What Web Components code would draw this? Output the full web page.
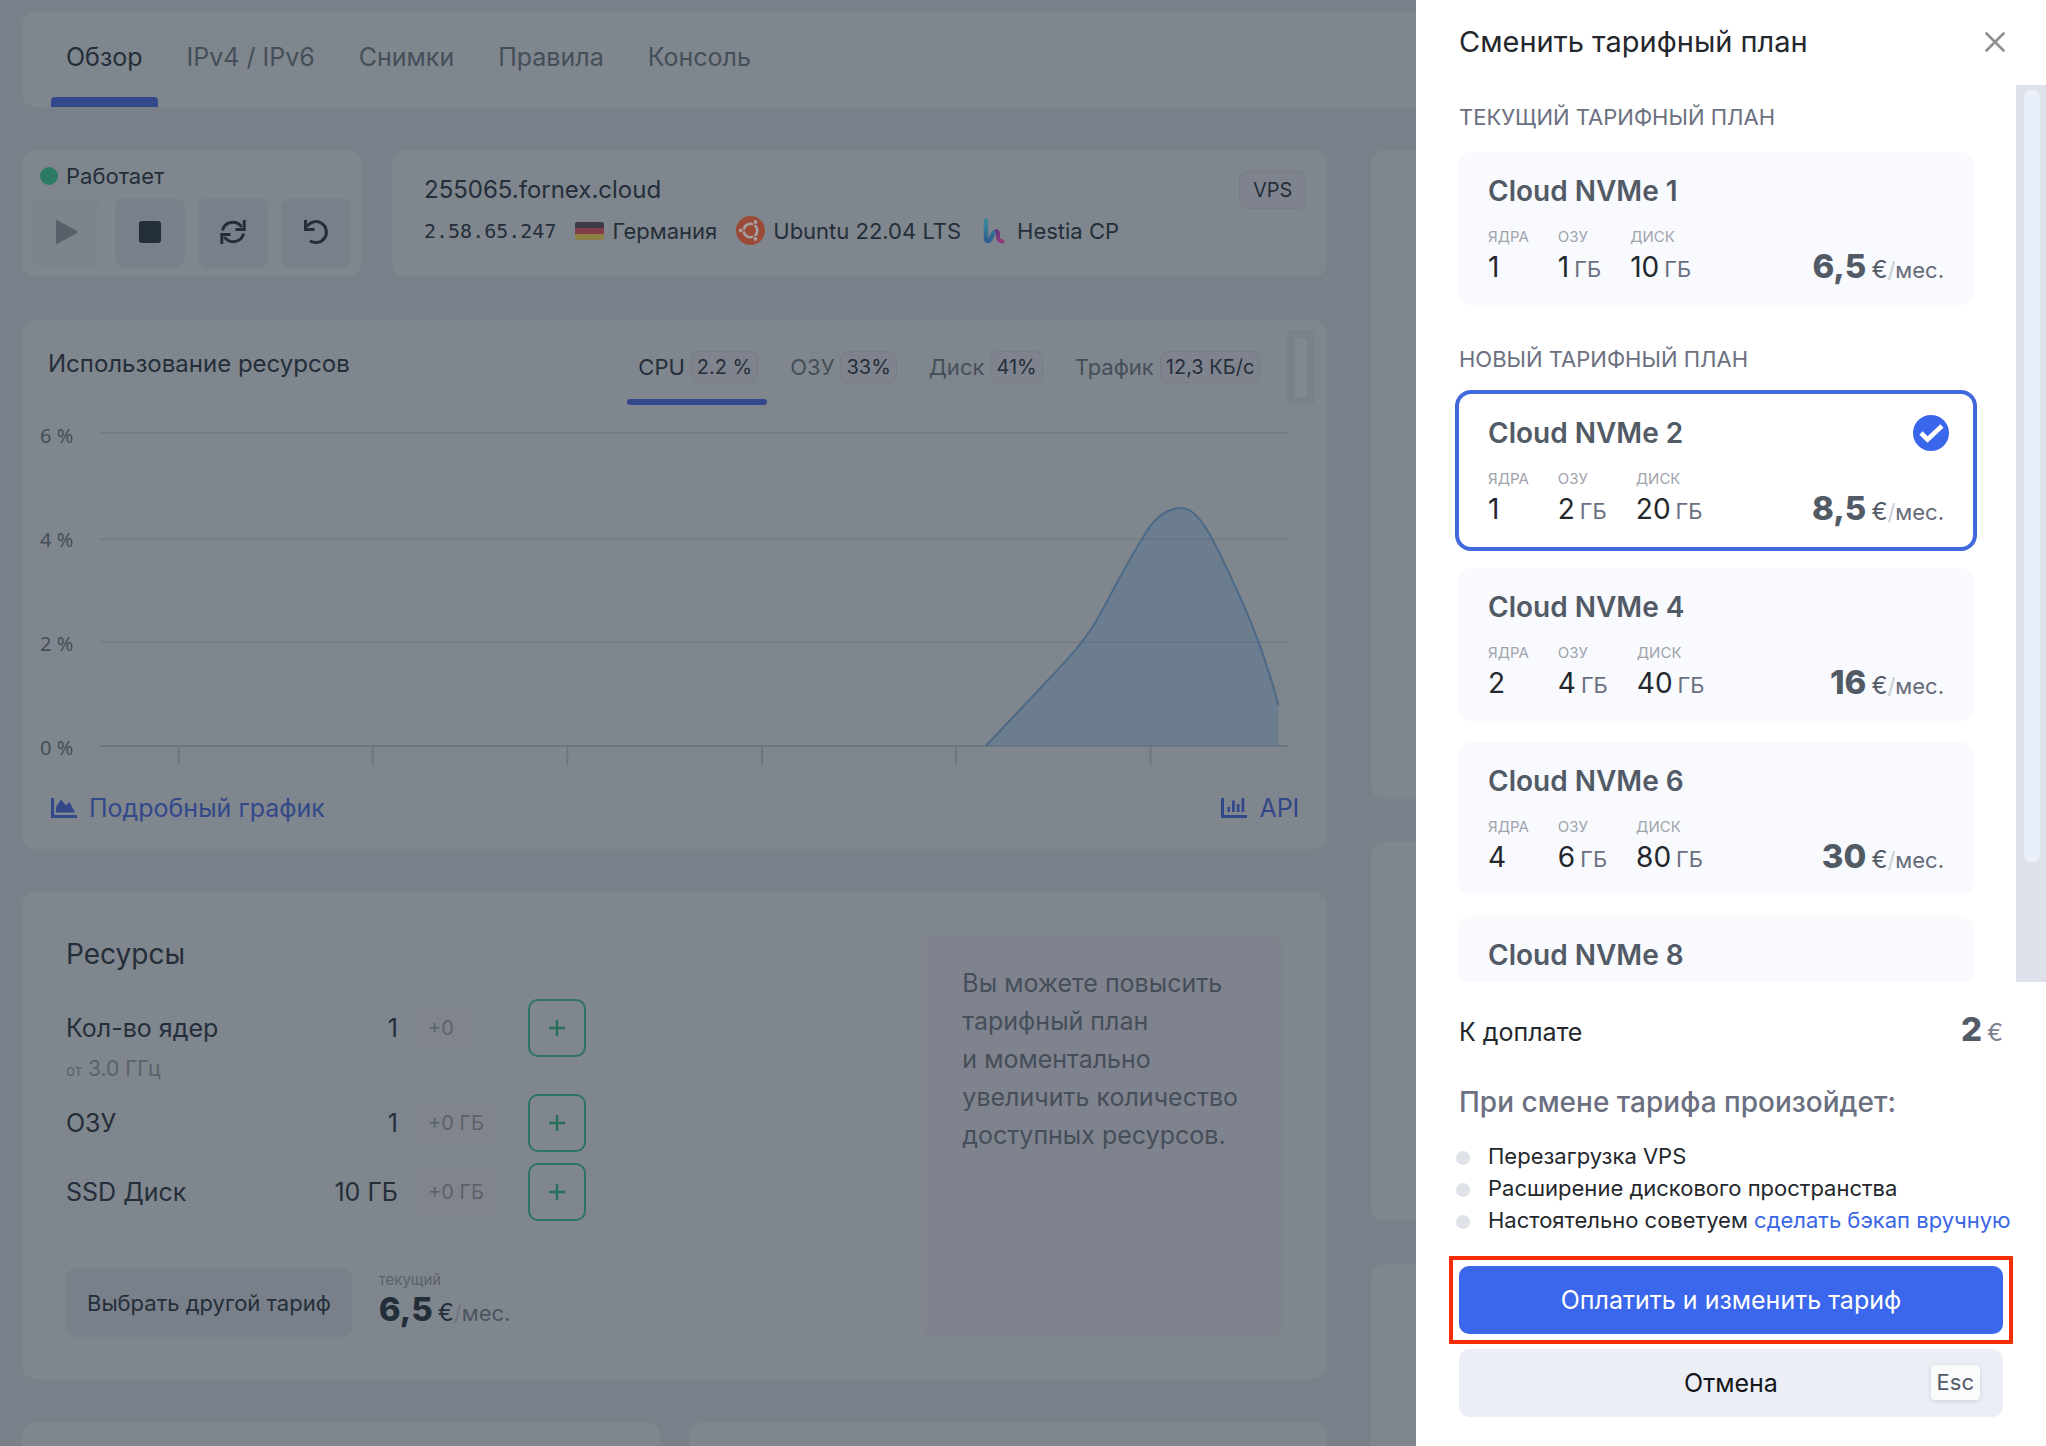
<!DOCTYPE html>
<html lang="ru">
<head>
<meta charset="utf-8">
<title>255065.fornex.cloud</title>
<style>
  html { height: 100%; }
  body {
    margin: 0;
    height: 100%;
    overflow: hidden;
    font-family: Inter, "Liberation Sans", sans-serif;
    font-size: 22px;
    line-height: 28px;
    --page: #798089;
    --card: #80868d;
    --soft: #7f838d;
    --pressed: #798089;
    --ink: #242e3a;
    --muted: #454e59;
    --faint: #5b626b;
    --blue: #33488a;
    --green: #26705c;
    background: var(--page);
    color: var(--ink);
  }
</style>
</head>
<body>
<vps-app></vps-app>

<script>
const icons = {
  play: '<svg viewBox="0 0 24 26" width="24" height="26"><path d="M1 1.500v23q0 1 1 .5l20-11q1.500-1 0-2L2 1Q1 .5 1 1.500z" fill="#5a6069"/></svg>',
  stop: '<svg viewBox="0 0 22 22" width="22" height="22"><rect width="22" height="22" rx="3" fill="currentColor"/></svg>',
  refresh: '<svg viewBox="0 0 26 26" width="26" height="26" fill="none" stroke="currentColor" stroke-width="3"><path d="M2.500 11.500A10.500 10.500 0 0 1 21.500 8M24.200 1v9.500H15.500M23.500 14.500A10.500 10.500 0 0 1 4.500 18M1.800 25v-9.500H10.500"/></svg>',
  undo: '<svg viewBox="0 0 26 26" width="26" height="26" fill="none" stroke="currentColor" stroke-width="3"><path d="M4 7.500A10.500 10.500 0 1 1 7 21.800M2.500 1v9.500H11.500"/></svg>',
  flag: '<svg viewBox="0 0 29 18" width="29" height="18"><clipPath id="c"><rect width="29" height="18" rx="2"/></clipPath><g clip-path="url(#c)"><rect width="29" height="6" fill="#3c3a47"/><rect y="6" width="29" height="6" fill="#823c4a"/><rect y="12" width="29" height="6" fill="#8f8146"/></g></svg>',
  ubuntu: '<svg viewBox="0 0 29 29" width="29" height="29"><circle cx="14.500" cy="14.500" r="14.500" fill="#9a4a37"/><circle cx="14.500" cy="14.500" r="6.800" fill="none" stroke="#a5a3a5" stroke-width="2.600"/><g stroke="#9a4a37" stroke-width="1.400"><path d="M14.500 14.500 4 14.500M14.500 14.500 19.700 5.400M14.500 14.500 19.700 23.600" stroke-dasharray="0 5 7"/></g><g fill="#a5a3a5" stroke="#9a4a37" stroke-width="1"><circle cx="4.800" cy="14.500" r="2.400"/><circle cx="19.500" cy="6.100" r="2.400"/><circle cx="19.500" cy="22.900" r="2.400"/></g></svg>',
  hestia: '<svg viewBox="0 0 29 29" width="29" height="29" fill="none" stroke-linecap="round" stroke-width="4.600"><defs><linearGradient id="a" x1="0" y1="0" x2="0" y2="1"><stop offset="0" stop-color="#3b8b9c"/><stop offset="1" stop-color="#2f5f8c"/></linearGradient><linearGradient id="b" x1="0" y1="0" x2="1" y2="1"><stop offset="0" stop-color="#5a3a80"/><stop offset="1" stop-color="#96397c"/></linearGradient></defs><path d="M14 16.500c3-2.500 4.500-1 4 3-.3 4 1 5.500 4.500 6" stroke="url(#b)" stroke-width="4"/><path d="M6 4.500v18c0 3.500 4 3 5-.5l2.500-5" stroke="url(#a)"/></svg>',
  area: '<svg viewBox="0 0 26 20" width="26" height="20" fill="currentColor"><path d="M0 0h3v17h23v3H0z"/><path d="M5 14.500V9l5-7.500 5 6 3.500-3.500 5.500 10.500z"/></svg>',
  bars: '<svg viewBox="0 0 26 20" width="26" height="20" fill="currentColor"><path d="M0 0h3v17h23v3H0z"/><path d="M6.500 9h2.500v5H6.500zM11 2.500h2.800V14H11zM15.800 6h2.700v8h-2.700zM20.500 0h2.800v14h-2.800z"/></svg>',
  plus: '<svg viewBox="0 0 18 18" width="18" height="18" stroke="currentColor" stroke-width="2.400"><path d="M9 1v16M1 9h16"/></svg>',
  close: '<svg viewBox="0 0 20 20" width="20" height="20" stroke="currentColor" stroke-width="2.600" stroke-linecap="round"><path d="M1.500 1.500l17 17M18.500 1.500l-17 17"/></svg>',
  check: '<svg viewBox="0 0 36 36" width="36" height="36"><circle cx="18" cy="18" r="18" fill="#3966eb"/><path d="M8 18l6.500 6.500L29 11" fill="none" stroke="#fff" stroke-width="4.600"/></svg>'
};

const base = `
  *, *::before, *::after { box-sizing: border-box; }
  :host { display: block; box-sizing: border-box; }
  svg { display: block; flex: none; }
  h1, h2, h3, p, ul, dl, dd { margin: 0; padding: 0; font-weight: inherit; }
  a { color: inherit; text-decoration: none; }
  button { font: inherit; color: inherit; border: 0; background: none; padding: 0; margin: 0; cursor: pointer; }
`;

function define(name, render) {
  customElements.define(name, class extends HTMLElement {
    constructor() {
      super();
      this.attachShadow({ mode: 'open' });
    }
    connectedCallback() {
      const t = document.createElement('template');
      t.innerHTML = render(this);
      this.shadowRoot.replaceChildren(t.content.cloneNode(true));
    }
  });
}

define('ui-card', () => `
  <style>${base}
    :host { background: var(--card); border-radius: 14px; min-width: 0; }
  </style><slot></slot>`);

define('ui-badge', () => `
  <style>${base}
    :host { display: inline-flex; align-items: center; justify-content: center; height: 32px; padding: 0 5px;
      font-size: 20px; color: var(--ink); background: var(--soft); border: 1px solid #777d86; border-radius: 8px; white-space: nowrap; }
    :host([large]) { height: 38px; padding: 0 13px; }
  </style><slot></slot>`);

define('price-tag', el => `
  <style>${base}
    :host { display: flex; align-items: baseline; white-space: nowrap; line-height: 24px; font-size: 22px; color: var(--price, #525a66); }
    b { font-size: 33px; line-height: 38px; font-weight: 800; margin-right: 5px; }
    .cur { font-size: 24px; }
    .sep { color: var(--sep, #c9ced6); }
    .per { color: var(--per, #656b78); }
    :host([total]) .cur { color: #7b808c; }
  </style><b>${el.getAttribute('value')}</b><span class="cur">€</span>${el.hasAttribute('total') ? '' : '<span class="sep">/</span><span class="per">мес.</span>'}`);

define('section-tabs', () => `
  <style>${base}
    nav { display: flex; gap: 14px; padding: 0 29px; height: 95px; font-size: 25px; line-height: 32px; color: var(--muted); }
    a { display: flex; flex-direction: column; padding: 29px 15px 0; }
    a::after { content: ""; height: 10px; margin: auto -15px 0; border-radius: 4px 4px 0 0; }
    a[aria-current] { color: var(--ink); }
    a[aria-current]::after { background: var(--blue); }
  </style>
  <nav><a href="#overview" aria-current="page">Обзор</a><a href="#ip">IPv4 / IPv6</a><a href="#snapshots">Снимки</a><a href="#rules">Правила</a><a href="#console">Консоль</a></nav>`);

define('power-panel', () => `
  <style>${base}
    :host { padding: 12px 10px 9px; }
    .state { display: flex; align-items: center; gap: 8px; padding-left: 8px; }
    .dot { width: 18px; height: 18px; border-radius: 50%; background: #2a7a66; }
    .keys { display: grid; grid-template-columns: repeat(4, 1fr); gap: 13px; margin-top: 8px; }
    button { display: flex; align-items: center; justify-content: center; height: 70px; padding-bottom: 3px; border-radius: 10px; background: var(--pressed); }
    button:disabled { background: #7e848b; }
  </style>
  <div class="state"><span class="dot"></span>Работает</div>
  <div class="keys">
    <button aria-label="Включить" disabled>${icons.play}</button>
    <button aria-label="Выключить">${icons.stop}</button>
    <button aria-label="Перезагрузить">${icons.refresh}</button>
    <button aria-label="Переустановить">${icons.undo}</button>
  </div>`);

define('server-info', () => `
  <style>${base}
    :host { display: flex; justify-content: space-between; align-items: flex-start; padding: 21px 21px 0 32px; }
    h1 { font-size: 24px; line-height: 32px; padding-top: 3px; }
    .meta { display: flex; align-items: center; gap: 19px; margin-top: 10px; }
    .meta span { display: flex; align-items: center; gap: 8px; }
    .ip { font-family: "DejaVu Sans Mono", monospace; font-size: 20px; }
  </style>
  <div>
    <h1>255065.fornex.cloud</h1>
    <div class="meta">
      <span class="ip">2.58.65.247</span>
      <span>${icons.flag}Германия</span>
      <span>${icons.ubuntu}Ubuntu 22.04 LTS</span>
      <span>${icons.hestia}Hestia CP</span>
    </div>
  </div>
  <ui-badge large>VPS</ui-badge>`);

define('usage-chart', () => `
  <style>${base}
    :host { padding: 10px 12px 0 26px; height: 529px; }
    .head { display: flex; align-items: flex-start; height: 75px; }
    h2 { font-size: 24px; line-height: 32px; margin: 18px auto 0 0; }
    nav { display: flex; gap: 12px; padding-top: 21px; margin-right: 18px; color: var(--muted); }
    nav a { display: flex; align-items: center; gap: 6px; padding: 0 9px 0 11px; position: relative; }
    nav a[aria-current] { color: var(--ink); }
    nav a[aria-current]::after { content: ""; position: absolute; left: 0; right: 0; top: 48px; height: 6px; border-radius: 3px; background: var(--blue); }
    .grip { width: 28px; height: 75px; border: 8px solid #7b8189; border-radius: 4px; background: #82888f; }
    .plot { display: flex; margin: 17px 26px 0 -8px; gap: 26px; }
    .axis { display: flex; flex-direction: column; justify-content: space-between; height: 340px; width: 34px;
      font-family: "Noto Sans", sans-serif; font-size: 20px; white-space: nowrap; color: var(--muted); }
    .plot svg { flex: 1; width: 0; height: 335px; margin-top: 9px; }
    .links { display: flex; justify-content: space-between; margin-top: 26px; padding: 0 16px 0 3px; font-size: 25px; line-height: 32px; color: var(--blue); }
    .links a { display: flex; align-items: center; gap: 12px; }
  </style>
  <div class="head">
    <h2>Использование ресурсов</h2>
    <nav>
      <a href="#cpu" aria-current="true">CPU <ui-badge>2.2 %</ui-badge></a>
      <a href="#ram">ОЗУ <ui-badge>33%</ui-badge></a>
      <a href="#disk">Диск <ui-badge>41%</ui-badge></a>
      <a href="#traffic">Трафик <ui-badge>12,3 КБ/с</ui-badge></a>
    </nav>
    <div class="grip"></div>
  </div>
  <div class="plot">
    <div class="axis"><span>6 %</span><span>4 %</span><span>2 %</span><span>0 %</span></div>
    <svg viewBox="0 0 1191 335" preserveAspectRatio="none" role="img" aria-label="Загрузка CPU">
      <path d="M0 2H1191M0 108H1191M0 211H1191" stroke="#777c85" stroke-width="2"/>
      <path d="M0 315H1191" stroke="#6f767f" stroke-width="2"/>
      <path d="M79 316v18M273 316v18M468 316v18M663 316v18M857 316v18M1052 316v18" stroke="#6f767f" stroke-width="2"/>
      <path d="M887 315L956 242C970 227 985 211 997 191C1012 165 1028 132 1043 109C1052 92 1064 77 1083 77C1099 77 1112 104 1122 124C1139 160 1162 205 1180 274V315z" fill="#4d6f93" fill-opacity=".38"/>
      <path d="M887 315L956 242C970 227 985 211 997 191C1012 165 1028 132 1043 109C1052 92 1064 77 1083 77C1099 77 1112 104 1122 124C1139 160 1162 205 1180 274" fill="none" stroke="#4c6a88" stroke-width="2"/>
    </svg>
  </div>
  <div class="links"><a href="#chart">${icons.area}Подробный график</a><a href="#api">${icons.bars}API</a></div>`);

define('resource-row', el => `
  <style>${base}
    :host { display: grid; grid-template-columns: 332px 98px 58px; column-gap: 16px; align-items: center; }
    .name { display: flex; justify-content: space-between; font-size: 25px; line-height: 32px; }
    .add { justify-self: start; padding: 0 14px; height: 44px; line-height: 44px; border-radius: 8px; background: #80848c; color: var(--faint); font-size: 20px; white-space: nowrap; }
    button { display: flex; align-items: center; justify-content: center; width: 58px; height: 58px; border: 2px solid #2c7362; border-radius: 10px; color: var(--green); }
  </style>
  <div class="name"><span>${el.getAttribute('name')}</span><span>${el.getAttribute('value')}</span></div>
  <span class="add">${el.getAttribute('add')}</span>
  <button aria-label="Увеличить: ${el.getAttribute('name')}">${icons.plus}</button>
  <slot></slot>`);

define('resource-panel', () => `
  <style>${base}
    :host { display: flex; justify-content: space-between; padding: 44px 44px 42px; }
    .left { display: flex; flex-direction: column; }
    h2 { font-size: 28px; line-height: 36px; margin-bottom: 27px; }
    .rows { display: grid; gap: 11px; }
    .freq { line-height: 24px; font-size: 21px; color: var(--faint); white-space: nowrap; }
    .freq small { font-size: 15px; margin-right: 6px; }
    .foot { display: flex; gap: 27px; margin-top: 47px; }
    .foot button { height: 69px; padding: 0 21px; border-radius: 10px; background: var(--pressed); }
    .now { display: flex; flex-direction: column; padding-top: 2px; --price: #242e3a; --sep: #6f757e; --per: #4c545f; }
    .now small { font-size: 15px; line-height: 20px; color: var(--faint); }
    .tip { width: 361px; padding: 28px 40px; border-radius: 10px; background: var(--soft); color: var(--muted); font-size: 25px; line-height: 38px; }
  </style>
  <div class="left">
    <h2>Ресурсы</h2>
    <div class="rows">
      <resource-row name="Кол-во ядер" value="1" add="+0"><div class="freq"><small>от</small>3.0 ГГц</div></resource-row>
      <resource-row name="ОЗУ" value="1" add="+0 ГБ"></resource-row>
      <resource-row name="SSD Диск" value="10 ГБ" add="+0 ГБ"></resource-row>
    </div>
    <div class="foot">
      <button>Выбрать другой тариф</button>
      <div class="now"><small>текущий</small><price-tag value="6,5"></price-tag></div>
    </div>
  </div>
  <p class="tip">Вы можете повысить тарифный план<br>и&nbsp;моментально увеличить количество доступных ресурсов.</p>`);

define('plan-card', el => {
  const specs = el.getAttribute('specs');
  const [cores, ram, disk] = specs ? specs.split(' ') : [];
  return `
  <style>${base}
    :host { background: #f8fafe; border-radius: 12px; padding: 21px 29px; height: 153px; flex: none; }
    :host([selected]) { background: #fff; outline: 4px solid #4069df; }
    .top { display: flex; justify-content: space-between; height: 36px; line-height: 36px; }
    h3 { font-size: 28px; font-weight: 600; color: #525a66; white-space: nowrap; }
    .check { margin-right: -5px; }
    .bottom { display: flex; justify-content: space-between; align-items: flex-end; margin-top: 18px; }
    dl { display: flex; gap: 29px; white-space: nowrap; }
    dt { font-size: 15px; line-height: 20px; margin-bottom: 3px; color: #a0a4ac; }
    dd { font-size: 28px; line-height: 34px; color: #24272c; }
    dd small { font-size: 22px; color: #6b7080; margin-left: 5px; }
    price-tag { padding-bottom: 1px; }
  </style>
  <div class="top"><h3>${el.getAttribute('name')}</h3>${el.hasAttribute('selected') ? `<span class="check">${icons.check}</span>` : ''}</div>
  ${specs ? `<div class="bottom">
    <dl><div><dt>ЯДРА</dt><dd>${cores}</dd></div><div><dt>ОЗУ</dt><dd>${ram}<small>ГБ</small></dd></div><div><dt>ДИСК</dt><dd>${disk}<small>ГБ</small></dd></div></dl>
    <price-tag value="${el.getAttribute('price')}"></price-tag>
  </div>` : ''}`;
});

define('plan-drawer', () => `
  <style>${base}
    :host { display: flex; flex-direction: column; background: #fff; color: #24272c; }
    header { display: flex; align-items: center; justify-content: space-between; height: 85px; padding: 0 41px 2px 43px; flex: none; }
    h2 { font-size: 29px; line-height: 36px; }
    header button { color: #8f8f92; }
    .body { display: flex; flex: 1; min-height: 0; }
    .list { flex: 1; display: flex; flex-direction: column; gap: 21px; padding: 18px 43px 0; overflow: hidden; }
    .label { color: #6b7080; line-height: 28px; flex: none; }
    plan-card + .label { margin-top: 19px; }
    .track { width: 30px; padding: 5px 6px 0 8px; background: #dde1ea; }
    .thumb { height: 772px; border-radius: 8px; background: #eaf0f9; }
    footer { padding: 28px 43px 29px; }
    .due { display: flex; justify-content: space-between; align-items: baseline; height: 40px; font-size: 25px; }
    h3 { font-size: 28px; line-height: 36px; font-weight: 500; color: #6b7080; margin-top: 34px; white-space: nowrap; }
    ul { list-style: none; margin-top: 20px; line-height: 32px; }
    li { display: flex; align-items: center; gap: 18px; margin-left: -3px; white-space: nowrap; }
    li::before { content: ""; flex: none; width: 14px; height: 14px; margin-top: 4px; border-radius: 50%; background: #dfe2e8; }
    li a { color: #3a66e6; }
    .pay, .cancel { display: flex; align-items: center; justify-content: center; width: 100%; height: 68px; border-radius: 10px; font-size: 25px; }
    .pay { background: #3a67ec; color: #fff; }
    .mark { margin: 30px 0 15px; outline: 4px solid #f52d06; outline-offset: 6px; }
    .cancel { background: #ebeff5; color: #14161a; position: relative; }
    kbd { position: absolute; right: 23px; top: 16px; padding: 0 6px; height: 35px; line-height: 35px; border-radius: 4px;
      background: #fafbfd; color: #555b66; font-family: inherit; font-size: 22px; box-shadow: 0 1px 4px #c9ced8; }
  </style>
  <header><h2>Сменить тарифный план</h2><button aria-label="Закрыть">${icons.close}</button></header>
  <div class="body">
    <div class="list">
      <p class="label">ТЕКУЩИЙ ТАРИФНЫЙ ПЛАН</p>
      <plan-card name="Cloud NVMe 1" specs="1 1 10" price="6,5"></plan-card>
      <p class="label">НОВЫЙ ТАРИФНЫЙ ПЛАН</p>
      <plan-card selected name="Cloud NVMe 2" specs="1 2 20" price="8,5"></plan-card>
      <plan-card name="Cloud NVMe 4" specs="2 4 40" price="16"></plan-card>
      <plan-card name="Cloud NVMe 6" specs="4 6 80" price="30"></plan-card>
      <plan-card name="Cloud NVMe 8"></plan-card>
    </div>
    <div class="track"><div class="thumb"></div></div>
  </div>
  <footer>
    <div class="due"><span>К доплате</span><price-tag total value="2"></price-tag></div>
    <h3>При смене тарифа произойдет:</h3>
    <ul>
      <li>Перезагрузка VPS</li>
      <li>Расширение дискового пространства</li>
      <li><span>Настоятельно советуем <a href="#backup">сделать бэкап вручную</a></span></li>
    </ul>
    <div class="mark"><button class="pay">Оплатить и изменить тариф</button></div>
    <button class="cancel">Отмена<kbd>Esc</kbd></button>
  </footer>`);

define('vps-app', () => `
  <style>${base}
    :host { height: 100vh; overflow: hidden; position: relative; }
    main { display: flex; flex-direction: column; gap: 43px; padding: 12px 22px 0; height: 100%; overflow: hidden; }
    .cols { display: grid; grid-template-columns: minmax(0, 2fr) minmax(0, 1fr); gap: 44px; align-items: start; }
    .stack { display: flex; flex-direction: column; gap: 43px; }
    .status { display: grid; grid-template-columns: 339px minmax(0, 1fr); gap: 31px; height: 127px; }
    .half { display: grid; grid-template-columns: 1fr 1fr; gap: 30px; }
    .half ui-card { height: 200px; }
    .a { height: 649px; } .b { height: 379px; } .c { height: 300px; }
    plan-drawer { position: absolute; top: 0; right: 0; bottom: 0; width: 630px; }
  </style>
  <main>
    <ui-card><section-tabs></section-tabs></ui-card>
    <div class="cols">
      <div class="stack">
        <div class="status"><ui-card><power-panel></power-panel></ui-card><ui-card><server-info></server-info></ui-card></div>
        <ui-card><usage-chart></usage-chart></ui-card>
        <ui-card><resource-panel></resource-panel></ui-card>
        <div class="half"><ui-card></ui-card><ui-card></ui-card></div>
      </div>
      <div class="stack"><ui-card class="a"></ui-card><ui-card class="b"></ui-card><ui-card class="c"></ui-card></div>
    </div>
  </main>
  <plan-drawer role="dialog" aria-label="Сменить тарифный план"></plan-drawer>`);
</script>
</body>
</html>
